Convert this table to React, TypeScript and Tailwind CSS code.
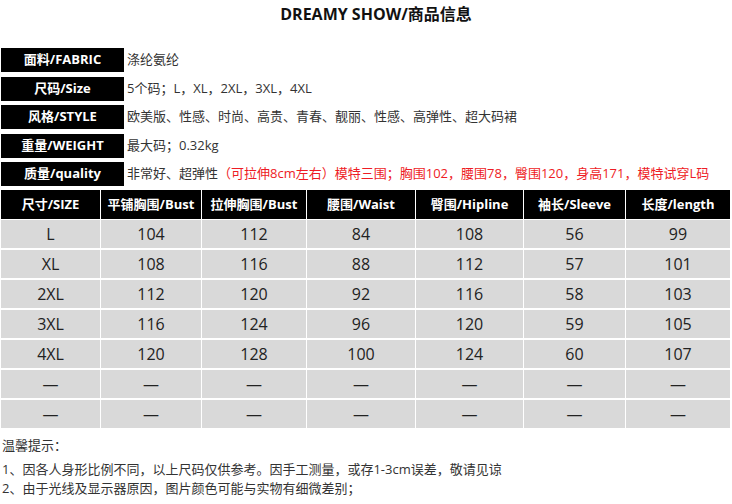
const font = '"Open Sans", "Noto Sans CJK SC", sans-serif';

const info = [
  { label: '面料/FABRIC', value: '涤纶氨纶' },
  { label: '尺码/Size', value: '5个码；L，XL，2XL，3XL，4XL' },
  { label: '风格/STYLE', value: '欧美版、性感、时尚、高贵、青春、靓丽、性感、高弹性、超大码裙' },
  { label: '重量/WEIGHT', value: '最大码；0.32kg' },
];

const headers = ['尺寸/SIZE', '平铺胸围/Bust', '拉伸胸围/Bust', '腰围/Waist', '臀围/Hipline', '袖长/Sleeve', '长度/length'];

const rows = [
  ['L', '104', '112', '84', '108', '56', '99'],
  ['XL', '108', '116', '88', '112', '57', '101'],
  ['2XL', '112', '120', '92', '116', '58', '103'],
  ['3XL', '116', '124', '96', '120', '59', '105'],
  ['4XL', '120', '128', '100', '124', '60', '107'],
  ['—', '—', '—', '—', '—', '—', '—'],
  ['—', '—', '—', '—', '—', '—', '—'],
];

function InfoRow({ label, children }: { label: string; children: React.ReactNode }) {
  return (
    <div className="flex h-[24px] items-center">
      <div className="ml-[1px] flex h-full w-[123px] items-center justify-center bg-black text-[13px] font-bold text-white">
        {label}
      </div>
      <div className="pl-[3px] text-[13px] text-[#333]">{children}</div>
    </div>
  );
}

export default function App() {
  return (
    <div className="h-[504px] w-[732px] overflow-hidden bg-white" style={{ fontFamily: font }}>
      {/* Title */}
      <div className="pt-[3px] text-center text-[16px] leading-[22px] font-bold text-[#111]">
        <span className="ml-[20px]">DREAMY SHOW/商品信息</span>
      </div>

      {/* Product info */}
      <div className="mt-[23px] flex flex-col gap-[4.5px]">
        {info.map((item) => (
          <InfoRow key={item.label} label={item.label}>
            {item.value}
          </InfoRow>
        ))}
        <InfoRow label="质量/quality">
          非常好、超弹性
          <span className="text-[#ee1c25]">（可拉伸8cm左右）模特三围；胸围102，腰围78，臀围120，身高171，模特试穿L码</span>
        </InfoRow>
      </div>

      {/* Size table */}
      <div className="mt-[4px] ml-[1px] grid w-[730px] grid-cols-[99px_100px_104px_108px_107px_101px_104px] gap-x-[1px] gap-y-[2px]">
        {headers.map((h, i) => (
          <div
            key={h}
            className={`flex h-[29px] items-center justify-center bg-black text-[13px] font-bold text-white ${i === 0 ? '' : ''}`}
          >
            {h}
          </div>
        ))}
        {rows.map((row, r) =>
          row.map((cell, c) => (
            <div
              key={`${r}-${c}`}
              className={`flex h-[28px] items-center justify-center bg-[#d9d9d9] text-[16px] text-[#222] ${r === 0 ? '-mt-[1px]' : ''}`}
            >
              {cell}
            </div>
          ))
        )}
      </div>

      {/* Notes */}
      <div className="mt-[8px] pl-[2px] text-[13px] text-[#333]">
        <p className="mb-[5px] leading-[19px]">温馨提示：</p>
        <p className="leading-[19px]">1、因各人身形比例不同，以上尺码仅供参考。因手工测量，或存1-3cm误差，敬请见谅</p>
        <p className="leading-[19px]">2、由于光线及显示器原因，图片颜色可能与实物有细微差别；</p>
      </div>
    </div>
  );
}
